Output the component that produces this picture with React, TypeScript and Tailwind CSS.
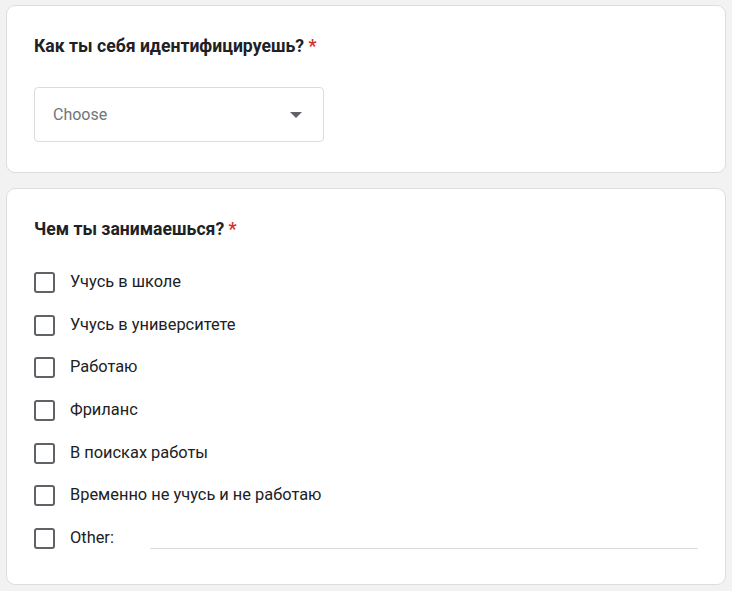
import { useState } from 'react'

const options = [
  'Учусь в школе',
  'Учусь в университете',
  'Работаю',
  'Фриланс',
  'В поисках работы',
  'Временно не учусь и не работаю',
]

function Checkbox() {
  return <span className="block h-[21px] w-[21px] shrink-0 rounded-[3px] border-2 border-[#5f6368]" />
}

export default function App() {
  const [other, setOther] = useState('')

  return (
    <div
      className="min-h-screen bg-[#f3f2f3] px-[6px] pt-[5px] text-[#202124]"
      style={{ fontFamily: 'Roboto, "Noto Sans", sans-serif' }}
    >
      <div className="flex flex-col gap-[15px]">
        {/* first question */}
        <section className="h-[168px] rounded-[9px] border border-[#dedcdf] bg-white px-[27px] pt-[30px]">
          <h2 className="text-[17.6px] font-bold leading-[20px]">
            Как ты себя идентифицируешь? <span className="text-[#d93025]">*</span>
          </h2>
          <button className="mt-[31px] flex h-[55px] w-[290px] items-center justify-between rounded-[4px] border border-[#dadce0] pl-[18px] pr-[21px]">
            <span className="text-[16px] text-[#70757a]">Choose</span>
            <svg width="12" height="6" viewBox="0 0 12 6">
              <path d="M0 0h12L6 6z" fill="#5f6368" />
            </svg>
          </button>
        </section>

        {/* second question */}
        <section className="h-[397px] rounded-[9px] border border-[#dedcdf] bg-white px-[27px] pt-[30px]">
          <h2 className="text-[17.6px] font-bold leading-[20px]">
            Чем ты занимаешься? <span className="text-[#d93025]">*</span>
          </h2>
          <ul className="mt-[22px] flex flex-col">
            {options.map((o) => (
              <li key={o} className="flex h-[42.7px] items-center gap-[15px]">
                <Checkbox />
                <span className="text-[16.4px]">{o}</span>
              </li>
            ))}
            <li className="flex h-[42.7px] items-center gap-[15px]">
              <Checkbox />
              <span className="text-[16.4px]">Other:</span>
              <input
                value={other}
                onChange={(e) => setOther(e.target.value)}
                className="ml-[21px] h-[22px] flex-1 border-b border-[#dadce0] outline-none"
              />
            </li>
          </ul>
        </section>
      </div>
    </div>
  )
}
